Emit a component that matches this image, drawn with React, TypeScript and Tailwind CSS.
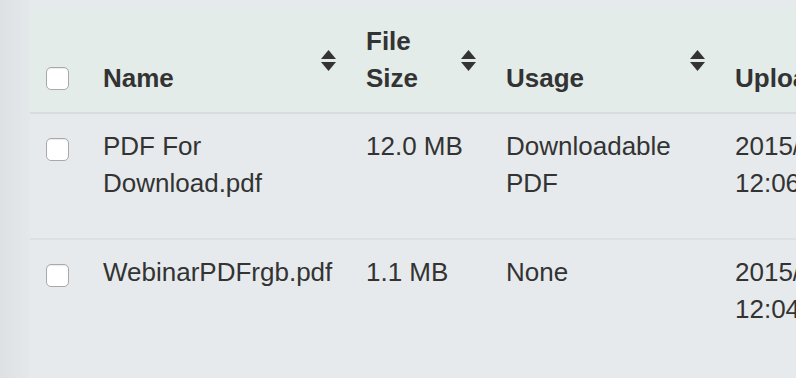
import React from "react";

const rows = [
  {
    id: 1,
    name: "PDF For Download.pdf",
    size: "12.0 MB",
    usage: "Downloadable PDF",
    date: "2015/06/12",
    time: "12:06 PM",
  },
  {
    id: 2,
    name: "WebinarPDFrgb.pdf",
    size: "1.1 MB",
    usage: "None",
    date: "2015/06/12",
    time: "12:04 PM",
  },
];

function SortIcon() {
  return (
    <svg width="15" height="21" viewBox="0 0 15 21" className="shrink-0 self-center">
      <path d="M7.5 0 L15 9 L0 9 Z" fill="#333" />
      <path d="M0 12 L15 12 L7.5 21 Z" fill="#333" />
    </svg>
  );
}

function Checkbox() {
  return (
    <span className="block w-[23px] h-[23px] rounded-[5px] border border-[#a9a9a9] bg-white shadow-[inset_0_1px_1px_rgba(0,0,0,0.08)]" />
  );
}

function HeaderCell({ label, width }: { label: React.ReactNode; width: string }) {
  return (
    <div className={`${width} shrink-0 flex items-end justify-between pl-4 pr-[14px] pt-[15px] pb-[15px]`}>
      <span className="font-bold">{label}</span>
      <SortIcon />
    </div>
  );
}

export default function App() {
  return (
    <div
      className="w-[796px] h-[378px] overflow-hidden flex bg-[#e6eaec] text-[#333] text-[26px] leading-[37px]"
      style={{ fontFamily: '"Liberation Sans", Arial, sans-serif' }}
    >
      <div className="w-[30px] shrink-0 bg-gradient-to-r from-[#dde1e4] to-[#e4e8eb]" />
      <div className="pt-2 flex-1 min-w-0">
        <div className="w-[900px]">
          {/* header */}
          <div className="flex bg-[#e4ecea] border-b-2 border-[#d8dcdc]">
            <div className="w-[57px] shrink-0 flex items-end pl-4 pb-[22px]">
              <Checkbox />
            </div>
            <HeaderCell label="Name" width="w-[263px]" />
            <HeaderCell
              label={
                <>
                  File
                  <br />
                  Size
                </>
              }
              width="w-[140px]"
            />
            <HeaderCell label="Usage" width="w-[229px]" />
            <div className="flex-1 flex items-end pl-4 pt-[15px] pb-[15px]">
              <span className="font-bold">Uploaded</span>
            </div>
          </div>

          {/* rows */}
          {rows.map((r, i) => (
            <div
              key={r.id}
              className={
                i === rows.length - 1
                  ? "flex h-[160px]"
                  : "flex h-[126px] border-b-2 border-[#dde0e2]"
              }
            >
              <div className="w-[57px] shrink-0 pl-4 pt-[24px]">
                <Checkbox />
              </div>
              <div className="w-[263px] shrink-0 px-4 pt-[14px] pr-[60px]">{r.name}</div>
              <div className="w-[140px] shrink-0 px-4 pt-[14px]">{r.size}</div>
              <div className="w-[229px] shrink-0 px-4 pt-[14px] pr-[40px]">{r.usage}</div>
              <div className="flex-1 px-4 pt-[14px] whitespace-nowrap">
                {r.date}
                <br />
                {r.time}
              </div>
            </div>
          ))}
        </div>
      </div>
    </div>
  );
}
